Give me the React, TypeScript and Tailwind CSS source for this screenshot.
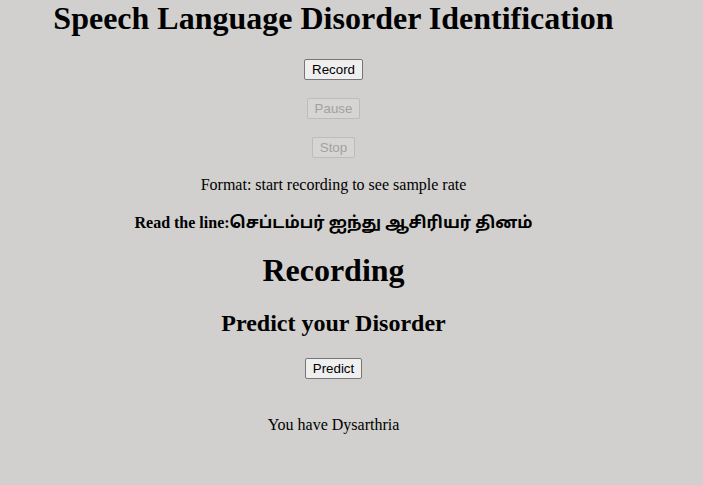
export default function App() {
  const btn =
    "font-['Liberation_Sans',Arial,sans-serif] text-[13.33px] leading-[16px] px-[7px] py-[1px] border rounded-[2px] h-[21px]";
  return (
    <div className="min-h-[485px] w-[703px] bg-[#d1d0ce] font-['Liberation_Serif','Times_New_Roman',serif] text-black">
      <div className="w-[667px] flex flex-col items-center">
        <h1 className="text-[32px] font-bold leading-[37px] h-[37px]">Speech Language Disorder Identification</h1>
        <button className={`${btn} mt-[22px] bg-[#efefef] border-[#767676] text-black`}>Record</button>
        <button disabled className={`${btn} mt-[18px] bg-[#d6d5d3] border-[#bdbcbb] text-[#a2a1a0]`}>Pause</button>
        <button disabled className={`${btn} mt-[18px] bg-[#d6d5d3] border-[#bdbcbb] text-[#a2a1a0]`}>Stop</button>
        <p className="mt-[18px] text-[16px] leading-[18px]">Format: start recording to see sample rate</p>
        <p className="mt-[18px] text-[16px] leading-[20px] font-bold flex items-baseline">
          <span>Read the line:</span>
          <span className="font-['Noto_Sans','Noto_Sans_Tamil','Lohit_Tamil',sans-serif] text-[16.3px]">செப்டம்பர் ஐந்து ஆசிரியர் தினம்</span>
        </p>
        <h1 className="mt-[19px] text-[32px] font-bold leading-[37px]">Recording</h1>
        <h2 className="mt-[20px] text-[24px] font-bold leading-[28px]">Predict your Disorder</h2>
        <button className={`${btn} mt-[21px] bg-[#efefef] border-[#767676] text-black`}>Predict</button>
        <p className="mt-[37px] text-[16px] leading-[18px]">You have Dysarthria</p>
      </div>
    </div>
  );
}
